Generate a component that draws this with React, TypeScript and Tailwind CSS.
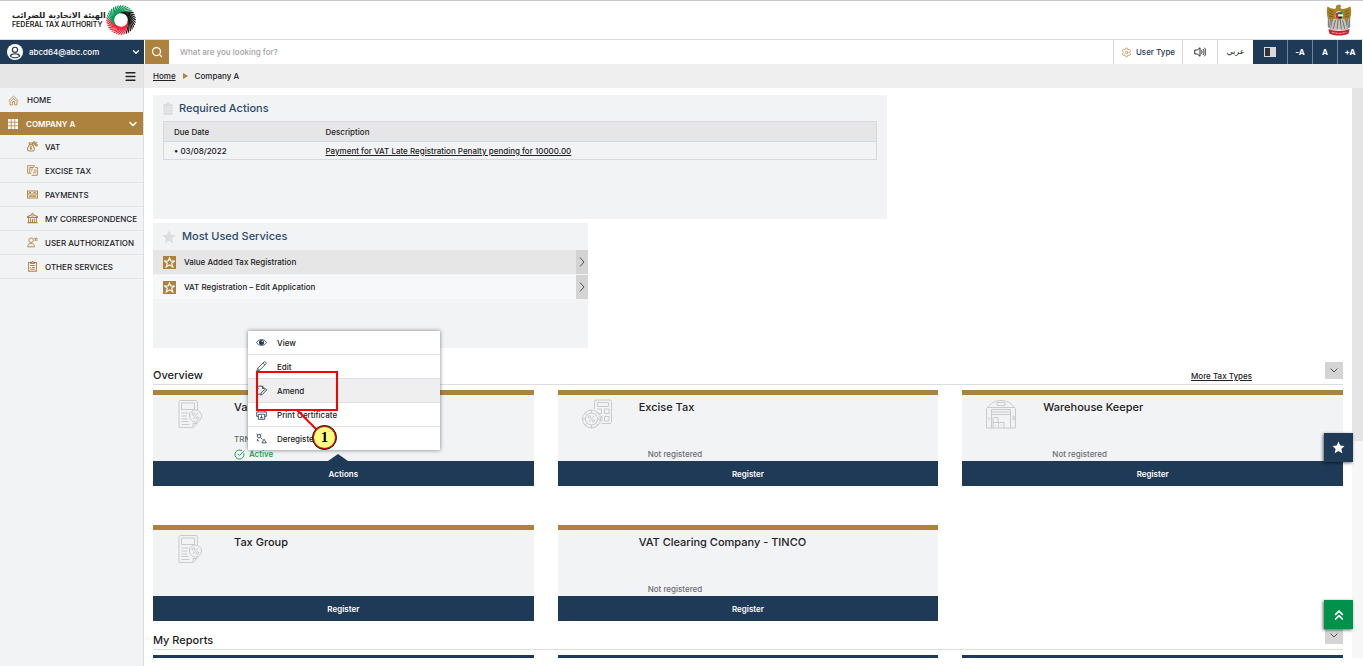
import React from "react";
import {
  ChevronDown,
  ChevronsUp,
  CircleCheckBig,
  Menu,
  Search,
  Settings,
} from "lucide-react";

type IconProps = { className?: string };

const STAR = "M12 1l3.300 7.300 7.900.9-5.900 5.400 1.700 7.900L12 18.500l-7 4 1.700-7.900L.8 9.200l7.900-.9z";

function StarSolid({ className }: IconProps) {
  return (
    <svg viewBox="0 0 24 24" className={className} fill="currentColor" aria-hidden="true">
      <path d={STAR} />
    </svg>
  );
}

function StarLine({ className }: IconProps) {
  return (
    <svg viewBox="0 0 24 24" className={className} fill="none" stroke="currentColor" strokeWidth="2.4" aria-hidden="true">
      <path d="M12 2l2.800 6.800H23l-6.300 4.900 2.500 8L12 17l-7.200 4.700 2.500-8L1 8.800h8.200z" />
    </svg>
  );
}

function RingLogo({ className }: IconProps) {
  const total = 36;
  const point = (deg: number, r: number) => {
    const a = (deg * Math.PI) / 180;
    return `${(50 + r * Math.cos(a)).toFixed(1)} ${(50 + r * Math.sin(a)).toFixed(1)}`;
  };
  const colour = (deg: number) => {
    if (deg >= 195 && deg < 325) return "#0a9a55";
    if (deg >= 325 || deg < 80) return "#17181a";
    return "#f0243a";
  };
  const blades = Array.from({ length: total }, (_, i) => (i * 360) / total);
  return (
    <svg viewBox="0 0 100 100" className={className} aria-hidden="true">
      {blades.map((deg) => (
        <path
          key={deg}
          d={`M${point(deg - 62, 24)} Q${point(deg - 30, 33)} ${point(deg, 49)}`}
          fill="none"
          stroke={colour(deg)}
          strokeWidth="4"
        />
      ))}
    </svg>
  );
}

function Emblem({ className }: IconProps) {
  return (
    <svg viewBox="0 0 78 100" className={className} role="img" aria-label="United Arab Emirates emblem">
      <path d="M4 40l18 8-2 34L4 72z M74 40l-18 8 2 34 16-10z" fill="#7f817f" />
      <path d="M16 48l4 6-3 28 M62 48l-4 6 3 28 M9 46l3 28 M69 46l-3 28" stroke="#dcdcd8" strokeWidth="2" fill="none" />
      <path
        d="M29 8c3-6 12-8 18-2l-4 5c2 3 5 5 9 5 8-2 15-4 23-8 3 10 3 24-1 36l-16 10H20L4 44C0 32 0 18 3 8c8 5 15 6 22 8 4-2 6-4 4-8z"
        fill="#a98529"
      />
      <path d="M8 18l14 8M6 27l15 7M8 37l13 4M70 18l-14 8M72 27l-15 7M70 37l-13 4" stroke="#62490f" strokeWidth="2.500" />
      <path d="M22 46h34l10 36H12z" fill="#c6c5bd" />
      <path d="M28 50l-7 28M36 50l-3 28M43 50l3 28M50 50l7 28" stroke="#5d5b54" strokeWidth="2.500" />
      <circle cx="39" cy="35" r="14" fill="#e9e3c8" stroke="#8c6c1d" strokeWidth="2" />
      <path d="M28 27h8v18h-5c-3-4-4-12-3-18z" fill="#d92332" />
      <path d="M36 25h14v8H36z" fill="#16804a" />
      <path d="M36 33h15v6H36z" fill="#fff" />
      <path d="M36 39h14l-4 7H36z" fill="#222" />
      <path d="M6 78c18 8 48 8 66 0l-3 14c-16 9-44 9-60 0z" fill="#c9202f" />
      <path d="M16 88c15 5 31 5 46 0" stroke="#f5c9cb" strokeWidth="3" strokeDasharray="3 1.500" fill="none" />
    </svg>
  );
}

function UserBadge({ className }: IconProps) {
  return (
    <svg viewBox="0 0 24 24" className={className} aria-hidden="true">
      <circle cx="12" cy="12" r="12" fill="#fff" />
      <circle cx="12" cy="8.800" r="4.800" fill="#1f3a57" />
      <path d="M3.800 18c1.200-3.200 4.200-4.200 8.200-4.200s7 1 8.200 4.200c-4.200 4.600-12.200 4.600-16.400 0z" fill="#1f3a57" />
      <circle cx="12" cy="8.800" r="3" fill="#fff" />
      <path d="M6.200 18.200c1-1.900 3-2.400 5.800-2.400s4.800.5 5.800 2.400c-3.200 2.200-8.400 2.200-11.600 0z" fill="#fff" />
    </svg>
  );
}

function HomeIcon({ className }: IconProps) {
  return (
    <svg viewBox="0 0 24 24" className={className} fill="none" stroke="currentColor" strokeWidth="1.800" aria-hidden="true">
      <path d="M1.500 12.500L12 2.500l10.500 10M4.500 12v9.500h5.200v-7h4.600v7h5.200V12M7 12.500L12 8l5 4.500" />
    </svg>
  );
}

function GridIcon({ className }: IconProps) {
  const cells = [0, 9, 18];
  return (
    <svg viewBox="0 0 25 25" className={className} fill="currentColor" aria-hidden="true">
      {cells.map((y) => cells.map((x) => <rect key={`${x}-${y}`} x={x} y={y} width="7" height="7" />))}
    </svg>
  );
}

function VatIcon({ className }: IconProps) {
  return (
    <svg viewBox="0 0 24 24" className={className} fill="none" stroke="currentColor" strokeWidth="2.200" aria-hidden="true">
      <path d="M5 8h7l3 6c2 5 0 8-3 8H5c-4 0-5-4-3-8zM4.500 4.500L6 8h5l1.500-3.500z" />
      <path d="M10.500 12.500c-3-1-4.500 1.500-2 2.500s3 3-2.500 2.500M14 9.500l8-7" />
      <circle cx="15.500" cy="3.500" r="2" />
      <circle cx="20.500" cy="9" r="2" />
    </svg>
  );
}

function ExciseIcon({ className }: IconProps) {
  return (
    <svg viewBox="0 0 24 24" className={className} fill="none" stroke="currentColor" strokeWidth="2" aria-hidden="true">
      <path d="M5 18H1.500V1.500H16V4M15 5.500H6v13h3M18 5.500h4.500v17H10M9 9h4M9 13h2" />
      <path d="M20 11.500c-4-2-6.500 1.200-3 2.500s2 4.500-3.500 2.700" />
    </svg>
  );
}

function PaymentsIcon({ className }: IconProps) {
  return (
    <svg viewBox="0 0 24 24" className={className} fill="none" stroke="currentColor" strokeWidth="2.200" aria-hidden="true">
      <path d="M1.200 4.500h21.600v15H1.200zM1 11h22M4 7.500h5M14 7.500h5" />
      <path d="M4 15.500h16" strokeWidth="3" />
    </svg>
  );
}

function CorrespondenceIcon({ className }: IconProps) {
  return (
    <svg viewBox="0 0 24 24" className={className} fill="none" stroke="currentColor" strokeWidth="2.200" aria-hidden="true">
      <path d="M1 10V8l7-3 4-4 4 4 7 3v2zM3.500 10v10M8 12v8M16 12v8M20.500 10v10M1 21h22M12 13v7M10 6.500h4" />
    </svg>
  );
}

function AuthorizationIcon({ className }: IconProps) {
  return (
    <svg viewBox="0 0 24 24" className={className} fill="none" stroke="currentColor" strokeWidth="2" aria-hidden="true">
      <circle cx="9" cy="7" r="5" />
      <path d="M1.500 21.500c0-5 3-7.500 7.500-7.500s7.500 2.500 7.500 7.500zM16 3h7M16.500 7H23M19 3v4" />
    </svg>
  );
}

function OtherIcon({ className }: IconProps) {
  return (
    <svg viewBox="0 0 24 24" className={className} fill="none" stroke="currentColor" strokeWidth="2.200" aria-hidden="true">
      <path d="M7 3.500H3.500v19h17v-19H17M8 5.500h8V3h-2l-2-2-2 2H8zM7 10h10M7 14h2M11 14h6M7 18h10" />
    </svg>
  );
}

function SpeakerIcon({ className }: IconProps) {
  return (
    <svg viewBox="0 0 24 24" className={className} fill="none" stroke="currentColor" strokeWidth="1.900" aria-hidden="true">
      <path d="M1.500 8v8h5l5.500 4.500v-17L6.500 8zM15 8.500c1.500 2 1.500 5 0 7M18 6c2.800 3.500 2.800 8.500 0 12M20.800 3.500c4 5 4 12 0 17" />
    </svg>
  );
}

function EyeIcon({ className }: IconProps) {
  return (
    <svg viewBox="0 0 24 24" className={className} aria-hidden="true">
      <path d="M1 12c5.500-8.500 16.500-8.500 22 0-5.500 8.500-16.500 8.500-22 0z" fill="none" stroke="currentColor" strokeWidth="1.700" />
      <circle cx="12" cy="12" r="5.500" fill="currentColor" />
      <circle cx="14" cy="10" r="1.500" fill="#fff" />
    </svg>
  );
}

function PencilIcon({ className }: IconProps) {
  return (
    <svg viewBox="0 0 24 24" className={className} fill="none" stroke="currentColor" strokeWidth="1.700" aria-hidden="true">
      <path d="M2 22l1.500-6L18 1.800c2-1 5 2 4 4L8 20.200zM3.500 16L8 20.200M15.500 4.500l4 4" />
    </svg>
  );
}

function AmendIcon({ className }: IconProps) {
  return (
    <svg viewBox="0 0 24 24" className={className} fill="none" stroke="currentColor" strokeWidth="1.800" aria-hidden="true">
      <path d="M3 8V2.500h11l4 4M3 12v8h6M0 7l3 3 3-3M10 22l1-4.500L21 8l2.500 2.500L14 20.500zM14 2.500v5h5" />
    </svg>
  );
}

function PrintIcon({ className }: IconProps) {
  return (
    <svg viewBox="0 0 24 24" className={className} fill="none" stroke="currentColor" strokeWidth="1.800" aria-hidden="true">
      <path d="M5 6V2h14v4M5 16H1.500V6.500h21V16H19M5 11.500h14v11H5zM8.500 19h7M12 14v5" />
    </svg>
  );
}

function DeregisterIcon({ className }: IconProps) {
  return (
    <svg viewBox="0 0 24 24" className={className} fill="none" stroke="currentColor" strokeWidth="1.800" aria-hidden="true">
      <circle cx="6.500" cy="7" r="3.800" />
      <path d="M1 2l3 2M9.500 3.500L12 2M10 10l4 4M13 21.500l4.500-8 5 8zM3 13v4h4" />
    </svg>
  );
}

function InvoiceIcon({ className }: IconProps) {
  return (
    <svg viewBox="0 0 30 30" className={className} fill="none" stroke="currentColor" strokeWidth="1" aria-hidden="true">
      <path d="M20.500 11V3c0-1-.5-1.500-1.500-1.500H3.500C2.500 1.500 2 2 2 3v25.500h14l4-4v-2M16 28.500v-4h4" />
      <path d="M4.500 4h13v6.500h-13zM4.500 14h7M4.500 17h5.500M4.500 20h6M4.500 22.500h7M4.500 25.500h8M12.500 14v3" />
      <circle cx="18.500" cy="17" r="6" />
      <path d="M21 14l-5 6" />
      <circle cx="16.500" cy="15" r="1.300" />
      <circle cx="20.500" cy="19" r="1.300" />
    </svg>
  );
}

function CalculatorIcon({ className }: IconProps) {
  return (
    <svg viewBox="0 0 30 30" className={className} fill="none" stroke="currentColor" strokeWidth="1" aria-hidden="true">
      <path d="M12.500 10V2.500c0-1 .5-1.500 1.500-1.500h14c1 0 1.500.5 1.500 1.500V23c0 1-.5 1.500-1.500 1.500h-8.500" />
      <path d="M15.500 3.500h11v4h-11zM15 10h4.500v4.500H17M22.500 10H27v4.500h-4.500zM22.500 17.500H27V22h-4.500zM19 17.500h1V22h-1" />
      <circle cx="9.500" cy="20" r="9" />
      <circle cx="9.500" cy="20" r="6" />
      <path d="M12 17l-5 6M9.500 11v3M9.500 26v3M.5 20h3M15.500 20h3M3.200 13.700l2 2M13.700 24.200l2 2M15.700 13.700l-2 2M5.200 24.200l-2 2" />
      <circle cx="7.500" cy="18" r="1.200" />
      <circle cx="11.500" cy="22" r="1.200" />
    </svg>
  );
}

function WarehouseIcon({ className }: IconProps) {
  return (
    <svg viewBox="0 0 30 30" className={className} fill="none" stroke="currentColor" strokeWidth="1" aria-hidden="true">
      <path d="M.5 29V9.500C5 4 9 1.500 15 1.500S25 4 29.500 9.500V29zM2 8.500h26M11 3.500h8v3h-8zM5.500 29V10.500h19V29M5.500 13h19M5.500 15.500h19M7.500 18.500h4.500v4.500M7 18.500V29M7 23.500h11V29M12.500 23.500V29M9 26h1M14.500 26h1M27 17h1v4h-1zM3 18v3" />
    </svg>
  );
}

const NAV_ITEMS: { label: string; icon: React.ReactNode }[] = [
  { label: "VAT", icon: <VatIcon className="size-[11px]" /> },
  { label: "EXCISE TAX", icon: <ExciseIcon className="size-[11px]" /> },
  { label: "PAYMENTS", icon: <PaymentsIcon className="size-[11px]" /> },
  { label: "MY CORRESPONDENCE", icon: <CorrespondenceIcon className="size-[11px]" /> },
  { label: "USER AUTHORIZATION", icon: <AuthorizationIcon className="size-[11px]" /> },
  { label: "OTHER SERVICES", icon: <OtherIcon className="size-[11px]" /> },
];

const SERVICES = [
  { label: "Value Added Tax Registration", tone: "bg-[#e6e6e6]" },
  { label: "VAT Registration – Edit Application", tone: "bg-[#f7f8fa]" },
];

const MENU_ITEMS: { label: string; icon: React.ReactNode; active?: boolean }[] = [
  { label: "View", icon: <EyeIcon className="size-[11px]" /> },
  { label: "Edit", icon: <PencilIcon className="size-[11px]" /> },
  { label: "Amend", icon: <AmendIcon className="size-[11px]" />, active: true },
  { label: "Print Certificate", icon: <PrintIcon className="size-[11px]" /> },
  { label: "Deregister", icon: <DeregisterIcon className="size-[11px]" /> },
];

function Sidebar() {
  return (
    <aside className="flex w-36 shrink-0 flex-col border-r border-[#dcdee0] bg-[#f2f3f5]">
      <div className="flex h-6 items-center justify-end bg-[#e6e6e6] pr-[6px]">
        <button type="button" aria-label="Toggle navigation">
          <Menu className="size-[13px] text-[#222]" strokeWidth={3} />
        </button>
      </div>
      <nav aria-label="Main">
        <a href="#home" className="flex h-6 items-center gap-2 pl-2">
          <HomeIcon className="size-[11px] text-[#b0843f]" />
          HOME
        </a>
        <a href="#company" className="flex h-[23px] items-center gap-2 bg-[#ad823f] pr-1 pl-2 font-semibold text-white">
          <GridIcon className="size-[10px]" />
          <span className="grow">COMPANY A</span>
          <ChevronDown className="size-3" strokeWidth={3} />
        </a>
        <ul>
          {NAV_ITEMS.map((item) => (
            <li key={item.label}>
              <a href="#service" className="flex h-6 items-center gap-[7px] border-b border-[#e3e5e8] pl-[27px]">
                <span className="text-[#b0843f]">{item.icon}</span>
                {item.label}
              </a>
            </li>
          ))}
        </ul>
      </nav>
    </aside>
  );
}

function Toolbar() {
  return (
    <div className="flex h-[25px] shrink-0 border-t border-[#dedede]">
      <button type="button" className="flex w-36 shrink-0 items-center gap-[6px] bg-[#1f3a57] pr-[3px] pl-[7px] text-left text-white">
        <UserBadge className="size-4" />
        <span className="grow">abcd64@abc.com</span>
        <ChevronDown className="size-[10px]" strokeWidth={3} />
      </button>
      <form className="ml-px flex grow" onSubmit={(e) => e.preventDefault()}>
        <button type="submit" aria-label="Search" className="flex w-6 items-center justify-center bg-[#ad823f] text-white">
          <Search className="size-3" strokeWidth={2.500} />
        </button>
        <input
          type="search"
          aria-label="Search"
          placeholder="What are you looking for?"
          className="grow bg-white px-[11px] outline-none placeholder:text-[#a3a3a3]"
        />
      </form>
      <button type="button" className="flex w-[69px] items-center justify-center gap-1 border-l border-[#dedede] text-[#1f3a57]">
        <Settings className="size-[11px] text-[#b0843f]" strokeWidth={1.500} />
        User Type
      </button>
      <button type="button" aria-label="Read aloud" className="flex w-9 items-center justify-center border-x border-[#dedede]">
        <SpeakerIcon className="size-3" />
      </button>
      <button type="button" lang="ar" className="w-[35px] font-['DejaVu_Sans',sans-serif]">
        عربي
      </button>
      <div className="mr-px flex gap-px bg-[#70849a] font-bold text-white">
        <button type="button" aria-label="Contrast" className="flex w-[34px] items-center justify-center bg-[#1f3a57]">
          <span className="flex h-[10px] w-3 border border-[#d9d9d9] bg-[#d9d9d9]">
            <span className="w-[5px] bg-[#333]" />
          </span>
        </button>
        <button type="button" className="w-6 bg-[#1f3a57]">-A</button>
        <button type="button" className="w-6 bg-[#1f3a57]">A</button>
        <button type="button" className="w-6 bg-[#1f3a57]">+A</button>
      </div>
    </div>
  );
}

function RequiredActions() {
  return (
    <section className="h-[124px] w-[734px] max-w-full bg-[#f2f3f5] px-[10px]">
      <h2 className="flex h-[26px] items-center gap-[6px] text-[11px] font-medium text-[#2b4a6b]">
        <svg viewBox="0 0 20 26" className="h-[13px] w-[10px]" aria-hidden="true">
          <path d="M1 4h5V2h2V0h4v2h2v2h5v22H1z" fill="#dcdde0" />
          <path d="M4 10h2M8 10h8M4 15h2M8 15h8M4 20h2M8 20h8" stroke="#f2f3f5" strokeWidth="1.500" />
        </svg>
        Required Actions
      </h2>
      <table className="w-full border border-[#d6d9dd] text-left">
        <thead>
          <tr className="h-5 border-b border-[#d6d9dd] bg-[#e6e6e6]">
            <th className="w-[152px] pl-[10px] font-medium">Due Date</th>
            <th className="pl-[10px] font-medium">Description</th>
          </tr>
        </thead>
        <tbody>
          <tr className="h-[18px]">
            <td className="pl-[10px]">• 03/08/2022</td>
            <td className="pl-[10px]">
              <a href="#payment" className="underline">
                Payment for VAT Late Registration Penalty pending for 10000.00
              </a>
            </td>
          </tr>
        </tbody>
      </table>
    </section>
  );
}

function MostUsedServices() {
  return (
    <section className="h-[125px] w-[435px] max-w-full bg-[#f2f3f5]">
      <h2 className="flex h-[27px] items-center gap-[6px] pl-[9px] text-[11px] font-medium text-[#2b4a6b]">
        <StarSolid className="size-[14px] text-[#dcdde0]" />
        Most Used Services
      </h2>
      <ul className="flex flex-col gap-px">
        {SERVICES.map((service) => (
          <li key={service.label}>
            <a href="#service" className={`flex h-6 items-center gap-2 pl-[10px] ${service.tone}`}>
              <span className="flex size-[13px] items-center justify-center bg-[#ad823f] text-white">
                <StarLine className="size-[11px]" />
              </span>
              <span className="grow">{service.label}</span>
              <span className="flex h-full w-3 items-center justify-center bg-[#d4d4d4] text-[#555]">
                <svg viewBox="0 0 6 10" className="h-[10px] w-[6px]" fill="none" stroke="currentColor" aria-hidden="true">
                  <path d="M1 .5L5 5 1 9.500" />
                </svg>
              </span>
            </a>
          </li>
        ))}
      </ul>
    </section>
  );
}

function SectionHeading({ title, link }: { title: string; link?: string }) {
  return (
    <div className="flex h-[23px] justify-between border-b border-[#dcdcdc]">
      <h2 className="mt-[5px] text-[11px] leading-4 font-medium">{title}</h2>
      <div className="flex gap-[73px]">
        {link && (
          <a href="#more" className="mt-2 leading-3 underline">
            {link}
          </a>
        )}
        <button type="button" aria-label={`Collapse ${title}`} className="flex h-[17px] w-[18px] items-center justify-center bg-[#d4d4d4] text-[#555]">
          <svg viewBox="0 0 8 5" className="h-[5px] w-2" fill="none" stroke="currentColor" aria-hidden="true">
            <path d="M.5.500L4 4 7.500.5" />
          </svg>
        </button>
      </div>
    </div>
  );
}

function TaxCard({
  title,
  icon,
  action,
  children,
}: {
  title: string;
  icon?: React.ReactNode;
  action: string;
  children?: React.ReactNode;
}) {
  return (
    <article className="relative flex h-24 flex-col border-t-[5px] border-[#ad823f] bg-[#f2f3f5]">
      <div className="flex grow">
        <div className="w-[81px] shrink-0 pt-1 pl-6 text-[#c9cacd]">{icon}</div>
        <div className="flex grow flex-col justify-between pt-1">
          <h3 className="text-[11px] leading-4 font-medium">{title}</h3>
          <div className="text-[#6c6e70]">{children}</div>
        </div>
      </div>
      <button type="button" className="h-[25px] bg-[#1f3a57] text-center font-semibold text-white">
        {action}
      </button>
    </article>
  );
}

function NotRegistered() {
  return <p className="pb-px pl-[9px] leading-3">Not registered</p>;
}

function ActionsMenu() {
  return (
    <div className="absolute bottom-9 left-[95px] w-48">
      <ul className="bg-white shadow-[0_0_4px_rgba(0,0,0,0.5)]">
        {MENU_ITEMS.map((item) => (
          <li key={item.label} className="border-b border-[#dddfe6] last:border-b-0">
            <button
              type="button"
              className={`flex h-[23px] w-full items-center gap-[10px] pl-2 text-left ${item.active ? "bg-[#efefef]" : "bg-white"}`}
            >
              <span className="text-[#1f3a57]">{item.icon}</span>
              {item.label}
            </button>
          </li>
        ))}
      </ul>
      <div className="absolute top-10 left-2 h-10 w-[82px] border-2 border-[#ff0000]" />
      <svg viewBox="0 0 24 24" className="absolute top-[78px] left-12 size-6" aria-hidden="true">
        <path d="M1 1l22 22" stroke="#ff0000" strokeWidth="2" />
      </svg>
      <span className="absolute top-[94px] left-16 flex size-[25px] items-center justify-center rounded-full border border-black bg-[#ffff80] font-['Liberation_Serif',serif] text-[15px] font-bold text-black ring-1 ring-[#ff0000] ring-inset">
        1
      </span>
    </div>
  );
}

export default function App() {
  return (
    <div className="flex h-screen flex-col overflow-hidden bg-white font-['Inter',sans-serif] text-[8px] font-medium text-[#222]">
      <header className="flex h-[39px] shrink-0 items-center justify-between border-t border-[#c9c9c9] pr-[11px] pl-3">
        <a href="#top" className="flex items-center">
          <span className="flex flex-col">
            <span lang="ar" dir="rtl" className="font-['DejaVu_Sans',sans-serif] leading-[10px] font-bold">
              الهيئة الاتحادية للضرائب
            </span>
            <span className="text-[7px] leading-2 font-semibold">FEDERAL TAX AUTHORITY</span>
          </span>
          <RingLogo className="size-[30px]" />
        </a>
        <Emblem className="h-8 w-[26px]" />
      </header>
      <Toolbar />
      <div className="flex min-h-0 grow">
        <Sidebar />
        <div className="flex min-w-0 grow flex-col pb-2">
          <nav aria-label="Breadcrumb" className="flex h-6 shrink-0 items-center gap-[7px] bg-[#efefef] pl-[9px]">
            <a href="#home" className="underline">
              Home
            </a>
            <svg viewBox="0 0 5 6" className="h-[6px] w-[5px]" aria-hidden="true">
              <path d="M0 0l5 3-5 3z" fill="#b0843f" />
            </svg>
            <span>Company A</span>
          </nav>
          <div className="flex min-h-0 grow">
            <main className="min-w-0 grow overflow-hidden px-[9px] pt-[7px]">
              <RequiredActions />
              <div className="h-1" />
              <MostUsedServices />
              <div className="pt-[14px]">
                <SectionHeading title="Overview" link="More Tax Types" />
                <div className="mt-[5px] grid grid-cols-3 gap-x-6 gap-y-[39px]">
                  <TaxCard title="Value Added Tax" icon={<InvoiceIcon className="size-[30px]" />} action="Actions">
                    <p className="leading-3">TRN</p>
                    <p className="flex items-center gap-1 pt-[3px] pb-px leading-3 text-[#0f9a50]">
                      <CircleCheckBig className="size-[11px]" />
                      Active
                    </p>
                    <svg viewBox="0 0 20 7" className="absolute bottom-[25px] left-[175px] h-[7px] w-5" aria-hidden="true">
                      <path d="M0 7l10-7 10 7z" fill="#1f3a57" />
                    </svg>
                    <div className="text-[#222]">
                      <ActionsMenu />
                    </div>
                  </TaxCard>
                  <TaxCard title="Excise Tax" icon={<CalculatorIcon className="size-[30px]" />} action="Register">
                    <NotRegistered />
                  </TaxCard>
                  <TaxCard title="Warehouse Keeper" icon={<WarehouseIcon className="size-[30px]" />} action="Register">
                    <NotRegistered />
                  </TaxCard>
                  <TaxCard title="Tax Group" icon={<InvoiceIcon className="size-[30px]" />} action="Register" />
                  <TaxCard title="VAT Clearing Company - TINCO" action="Register">
                    <NotRegistered />
                  </TaxCard>
                </div>
              </div>
              <div className="pt-[6px]">
                <SectionHeading title="My Reports" />
                <div className="mt-[5px] grid grid-cols-3 gap-6">
                  <div className="h-24 border-t-[3px] border-[#1f3a57] bg-[#f2f3f5]" />
                  <div className="h-24 border-t-[3px] border-[#1f3a57] bg-[#f2f3f5]" />
                  <div className="h-24 border-t-[3px] border-[#1f3a57] bg-[#f2f3f5]" />
                </div>
              </div>
            </main>
            <div className="w-[11px] shrink-0 bg-[#f7f7f7]" aria-hidden="true">
              <div className="h-[62%] bg-[#e5e5e5]" />
            </div>
          </div>
        </div>
      </div>
      <button
        type="button"
        aria-label="Favourites"
        className="fixed right-[10px] bottom-[204px] flex size-[29px] items-center justify-center bg-[#1f3a57] text-white shadow-[-1px_1px_3px_rgba(0,0,0,0.6)]"
      >
        <StarSolid className="size-[13px]" />
      </button>
      <button
        type="button"
        aria-label="Back to top"
        className="fixed right-[10px] bottom-[37px] flex size-[29px] items-center justify-center bg-[#00924b] text-white shadow-[-1px_1px_3px_rgba(0,0,0,0.6)]"
      >
        <ChevronsUp className="size-4" strokeWidth={2.500} />
      </button>
    </div>
  );
}
